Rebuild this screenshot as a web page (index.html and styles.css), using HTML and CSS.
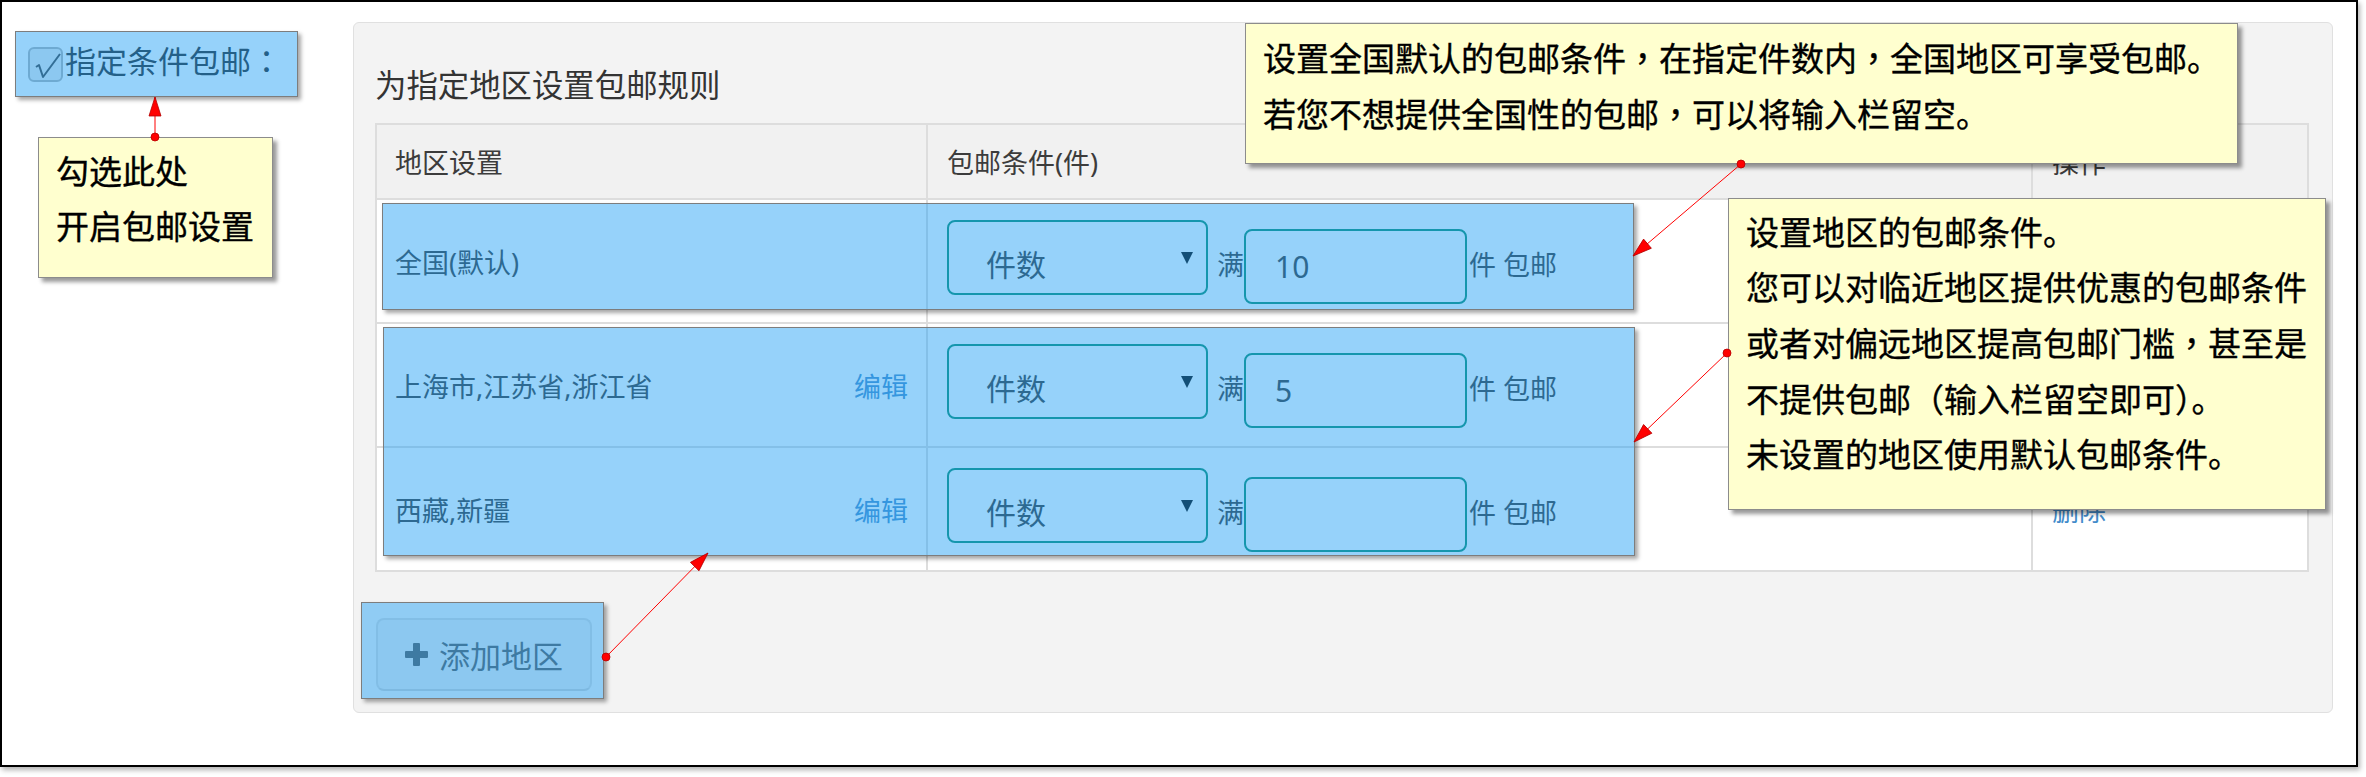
FILE: index.html
```html
<!DOCTYPE html>
<html lang="zh-CN">
<head>
<meta charset="utf-8">
<title>包邮设置</title>
<link rel="stylesheet" href="styles.css">
</head>
<body>
<div class="frame">
  <div class="side">
    <label class="cond">
      <span class="checkbox"><svg width="31" height="31" viewBox="0 0 31 31"><path d="M6 18 L9 16 L13 28 L30 5" fill="none" stroke="#3d3d3d" stroke-width="2" stroke-linejoin="round"/></svg></span>
      <span class="cond-text">指定条件包邮<span class="p" lang="zh-TW">：</span></span>
    </label>
  </div>

  <section class="panel">
    <h2 class="panel-title">为指定地区设置包邮规则</h2>
    <div class="rules">
      <div class="cell head first">地区设置</div>
      <div class="cell head">包邮条件(件)</div>
      <div class="cell head">操作</div>

      <div class="cell region first"><span>全国(默认)</span></div>
      <div class="cell terms">
        <div class="select"><span class="select-text">件数</span><svg class="caret" width="12" height="12" viewBox="0 0 12 12"><path d="M0 0 H12 L6 12 Z" fill="#000"/></svg></div>
        <span class="word">满</span>
        <input class="num" type="text" value="10">
        <span class="word tail">件 包邮</span>
      </div>
      <div class="cell op"></div>

      <div class="cell region first"><span>上海市,江苏省,浙江省</span><a class="link">编辑</a></div>
      <div class="cell terms">
        <div class="select"><span class="select-text">件数</span><svg class="caret" width="12" height="12" viewBox="0 0 12 12"><path d="M0 0 H12 L6 12 Z" fill="#000"/></svg></div>
        <span class="word">满</span>
        <input class="num" type="text" value="5">
        <span class="word tail">件 包邮</span>
      </div>
      <div class="cell op"></div>

      <div class="cell region first"><span>西藏,新疆</span><a class="link">编辑</a></div>
      <div class="cell terms">
        <div class="select"><span class="select-text">件数</span><svg class="caret" width="12" height="12" viewBox="0 0 12 12"><path d="M0 0 H12 L6 12 Z" fill="#000"/></svg></div>
        <span class="word">满</span>
        <input class="num" type="text" value="">
        <span class="word tail">件 包邮</span>
      </div>
      <div class="cell op"><a class="link">删除</a></div>
    </div>

    <button class="add-btn" type="button"><svg class="plus" width="23" height="23" viewBox="0 0 23 23"><path d="M8 1 Q8 0 9 0 H14 Q15 0 15 1 V8 H22 Q23 8 23 9 V14 Q23 15 22 15 H15 V22 Q15 23 14 23 H9 Q8 23 8 22 V15 H1 Q0 15 0 14 V9 Q0 8 1 8 H8 Z" fill="#555"/></svg><span>添加地区</span></button>
  </section>

  <div class="annotations">
    <div class="hl hl-cond"></div>
    <div class="hl hl-row1"></div>
    <div class="hl hl-rows"></div>
    <div class="hl hl-btn"></div>

    <div class="note note-1">勾选此处<br>开启包邮设置</div>
    <div class="note note-2">设置全国默认的包邮条件<span class="p" lang="zh-TW">，</span>在指定件数内<span class="p" lang="zh-TW">，</span>全国地区可享受包邮。<br>若您不想提供全国性的包邮<span class="p" lang="zh-TW">，</span>可以将输入栏留空。</div>
    <div class="note note-3">设置地区的包邮条件。<br>您可以对临近地区提供优惠的包邮条件<br>或者对偏远地区提高包邮门槛<span class="p" lang="zh-TW">，</span>甚至是<br>不提供包邮<span class="p" lang="zh-TW">（</span>输入栏留空即可<span class="p" lang="zh-TW">）</span>。<br>未设置的地区使用默认包邮条件。</div>

    <svg class="arrows" width="2358" height="767" viewBox="0 0 2358 767">
      <defs>
        <marker id="head" markerUnits="userSpaceOnUse" markerWidth="22" markerHeight="16" refX="20" refY="7" orient="auto" overflow="visible">
          <path d="M1 1 L20 7 L1 13 Z" fill="#ff0000" stroke="#b40000" stroke-width="0.8"/>
        </marker>
        <marker id="dot" markerUnits="userSpaceOnUse" markerWidth="12" markerHeight="12" refX="6" refY="6" overflow="visible">
          <circle cx="6" cy="6" r="4" fill="#ff0000" stroke="#b40000" stroke-width="0.8"/>
        </marker>
      </defs>
      <line x1="155" y1="137" x2="155" y2="97" class="arrow"/>
      <line x1="1741" y1="164" x2="1633" y2="256" class="arrow"/>
      <line x1="1727" y1="353" x2="1634" y2="442" class="arrow"/>
      <line x1="606" y1="657" x2="708" y2="553" class="arrow"/>
    </svg>
  </div>
</div>
</body>
</html>
```

FILE: styles.css
```css
* {
  box-sizing: border-box;
}

html,
body {
  margin: 0;
  padding: 0;
  background: #ffffff;
}

body {
  width: 2366px;
  height: 777px;
  overflow: hidden;
  font-family: "Noto Sans", "Noto Sans CJK SC", sans-serif;
  color: #333333;
}

/* centred full-width punctuation, as the reference font draws it */
.p {
  font-family: "Noto Sans CJK TC", "Noto Sans CJK SC", sans-serif;
}

.frame {
  position: relative;
  display: flex;
  width: 2358px;
  height: 767px;
  padding-top: 20px;
  border: 2px solid #000000;
  background: #ffffff;
  box-shadow: 2px 3px 5px rgba(0, 0, 0, 0.3);
}

/* left column with the checkbox */
.side {
  flex: none;
  width: 351px;
  padding: 25px 0 0 26px;
}

.cond {
  display: flex;
  align-items: flex-start;
}

.checkbox {
  flex: none;
  display: flex;
  width: 35px;
  height: 35px;
  border: 2px solid #b1b1b1;
  border-radius: 6px;
  background: #ececec;
}

.cond-text {
  margin: -7px 0 0 2px;
  font-size: 31px;
  line-height: 40px;
  color: #222222;
  white-space: nowrap;
}

/* main panel */
.panel {
  flex: none;
  width: 1980px;
  height: 691px;
  padding: 42px 22px 0 21px;
  border: 1px solid #e0e0e0;
  border-radius: 6px;
  background: #f3f3f3;
}

.panel-title {
  margin: 0 0 18px;
  font-size: 31.4px;
  font-weight: normal;
  line-height: 40px;
  color: #333333;
  white-space: nowrap;
}

.rules {
  display: grid;
  grid-template-columns: 551px 1105px 276px;
  grid-template-rows: 75px 124px 124px 124px;
  width: 1934px;
  border-top: 2px solid #dddddd;
  border-left: 2px solid #dddddd;
  background: #ffffff;
}

.cell {
  display: flex;
  align-items: center;
  padding: 0 18px 0 19px;
  border-right: 2px solid #dddddd;
  border-bottom: 2px solid #dddddd;
  font-size: 27px;
  white-space: nowrap;
}

.cell.first {
  padding-left: 18px;
}

.head {
  background: #f1f1f1;
  color: #3c3c3c;
}

.region {
  justify-content: space-between;
  color: #333333;
}

.link {
  color: #428bca;
  cursor: pointer;
}

.terms {
  align-items: flex-start;
  padding-top: 20px;
}

.select {
  flex: none;
  display: flex;
  align-items: center;
  justify-content: space-between;
  width: 261px;
  height: 75px;
  padding: 0 13px 0 37px;
  border: 2px solid #048a6a;
  border-radius: 8px;
  background: #ffffff;
}

.select-text {
  margin-top: 11px;
  font-size: 30px;
  color: #333333;
}

.caret {
  display: block;
  flex: none;
}

.word {
  margin: 26px 0 0 9px;
  font-size: 27px;
  line-height: 38px;
  color: #333333;
}

.word.tail {
  margin-left: 2px;
}

.num {
  flex: none;
  width: 223px;
  height: 75px;
  margin: 9px 0 0 0;
  padding: 0 0 0 29px;
  border: 2px solid #048a6a;
  border-radius: 8px;
  background: #ffffff;
  font-family: "Noto Sans", "Noto Sans CJK SC", sans-serif;
  font-size: 30px;
  color: #333333;
  outline: none;
}

.op {
  color: #428bca;
}

.add-btn {
  display: flex;
  align-items: center;
  width: 216px;
  height: 73px;
  margin-top: 46px;
  margin-left: 1px;
  padding: 0 0 0 27px;
  border: 2px solid #d9d9d9;
  border-bottom-color: #cfcfcf;
  border-radius: 8px;
  background: #ebebeb;
  font-family: "Noto Sans", "Noto Sans CJK SC", sans-serif;
  font-size: 31px;
  color: #555555;
  cursor: pointer;
}

.plus {
  display: block;
  flex: none;
  margin-right: 11px;
}

/* annotation layer */
.annotations {
  position: absolute;
  top: -2px;
  left: -2px;
  width: 2358px;
  height: 767px;
  pointer-events: none;
}

.hl {
  position: absolute;
  border: 1px solid #7d7d7d;
  background: rgba(39, 162, 245, 0.485);
  box-shadow: 3px 3px 4px rgba(0, 0, 0, 0.35);
}

.hl-cond {
  left: 15px;
  top: 31px;
  width: 283px;
  height: 66px;
}

.hl-row1 {
  left: 382px;
  top: 203px;
  width: 1252px;
  height: 107px;
}

.hl-rows {
  left: 383px;
  top: 327px;
  width: 1252px;
  height: 229px;
}

.hl-btn {
  left: 361px;
  top: 602px;
  width: 243px;
  height: 97px;
}

.note {
  position: absolute;
  padding: 6px 17px;
  border: 1px solid #8c8c8c;
  background: #ffffcf;
  box-shadow: 4px 4px 4px rgba(0, 0, 0, 0.4);
  font-size: 33px;
  line-height: 55px;
  color: #000000;
  white-space: nowrap;
  -webkit-text-stroke: 0.35px #000000;
}

.note-1 {
  left: 38px;
  top: 137px;
  width: 235px;
  height: 141px;
}

.note-2 {
  left: 1245px;
  top: 23px;
  width: 993px;
  height: 141px;
}

.note-3 {
  left: 1728px;
  top: 198px;
  width: 598px;
  height: 312px;
}

.arrows {
  position: absolute;
  top: 0;
  left: 0;
  overflow: visible;
}

.arrow {
  stroke: #ff0000;
  stroke-width: 1;
  marker-start: url(#dot);
  marker-end: url(#head);
}
```
